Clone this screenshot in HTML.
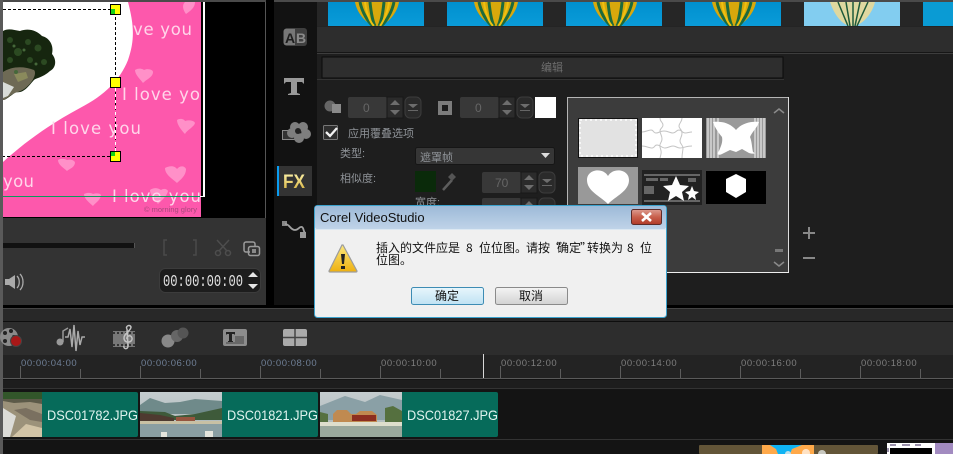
<!DOCTYPE html>
<html><head><meta charset="utf-8"><style>
html,body{margin:0;padding:0;background:#1e1e1e;width:953px;height:454px;overflow:hidden}
svg{display:block}
text{font-family:"Liberation Sans","WenQuanYi Zen Hei","Noto Sans CJK SC",sans-serif}
.love{font-family:"DejaVu Sans",sans-serif;font-size:16.5px;fill:#ffd6ea;font-weight:400}
.cn{fill:#8f9398;font-size:11px}
.rl{font-family:"Liberation Sans",sans-serif;font-size:9.5px;letter-spacing:.55px}
.clip{font-family:"Liberation Sans",sans-serif;font-size:14px;fill:#dff3ee}
.dl{font-family:"WenQuanYi Zen Hei","Noto Sans CJK SC",sans-serif;font-size:12px;fill:#111}
</style></head><body>
<svg width="953" height="454" viewBox="0 0 953 454" xmlns="http://www.w3.org/2000/svg">
<defs>
<linearGradient id="sky" x1="0" y1="0" x2="0" y2="1"><stop offset="0" stop-color="#0090cf"/><stop offset="1" stop-color="#0a9bd8"/></linearGradient>
<linearGradient id="title" x1="0" y1="0" x2="0" y2="1"><stop offset="0" stop-color="#9dbad8"/><stop offset="1" stop-color="#bfd3e8"/></linearGradient>
<linearGradient id="red" x1="0" y1="0" x2="0" y2="1"><stop offset="0" stop-color="#dc9c90"/><stop offset=".5" stop-color="#c8604c"/><stop offset="1" stop-color="#b03a28"/></linearGradient>
<linearGradient id="ok" x1="0" y1="0" x2="0" y2="1"><stop offset="0" stop-color="#e8f6fc"/><stop offset="1" stop-color="#bfe2f3"/></linearGradient>
<linearGradient id="cancel" x1="0" y1="0" x2="0" y2="1"><stop offset="0" stop-color="#f4f4f4"/><stop offset="1" stop-color="#d2d2d2"/></linearGradient>
<linearGradient id="warn" x1="0" y1="0" x2="0" y2="1"><stop offset="0" stop-color="#fbe67a"/><stop offset="1" stop-color="#eeb010"/></linearGradient>
<linearGradient id="fx" x1="0" y1="0" x2="0" y2="1"><stop offset="0" stop-color="#fff6b0"/><stop offset="1" stop-color="#d0a830"/></linearGradient>
<linearGradient id="mt" x1="0" y1="0" x2="0" y2="1"><stop offset="0" stop-color="#c4ccce"/><stop offset=".5" stop-color="#b8c2c4"/><stop offset="1" stop-color="#a8b4b4"/></linearGradient>
<g id="bl"><rect width="96" height="24" fill="url(#sky)"/>
<path d="M27 0H71C69 12 58 24 49 24S29 12 27 0Z" fill="#d8a80c"/>
<path d="M32 0C34 10 40 20 45 24M42 0C43 10 45 20 47 24M56 0C55 10 53 20 51 24M66 0C64 10 58 20 53 24" fill="none" stroke="#1d6a3c" stroke-width="3"/>
<path d="M37 0C38 10 42 20 46 24M61 0C60 10 55 20 52 24" fill="none" stroke="#f0c010" stroke-width="2"/></g>
<g id="spin"><rect x="0" y="0" width="39" height="21" rx="2" fill="#383838"/><rect x="39" y="0" width="16" height="21" fill="#2b2b2b" stroke="#181818"/><path d="M47 3l5 5h-10zM47 18l5-5h-10z" fill="#6d6d6d"/><rect x="57" y="0" width="16" height="21" rx="5" fill="#2a2a2a" stroke="#3c3c3c"/><path d="M60 7h10l-5 4z" fill="#6d6d6d"/><rect x="60" y="13" width="10" height="1" fill="#666"/></g>
</defs>

<rect width="953" height="454" fill="#1e1e1e"/>

<!-- preview panel -->
<rect x="0" y="0" width="953" height="2" fill="#4a4a4a"/>
<rect x="3" y="2" width="262" height="216" fill="#000"/>
<rect x="3" y="2" width="198" height="215" fill="#fd58ac"/>
<path d="M3 2H128C134 25 135 40 128 60C120 80 105 95 80 108C50 124 25 142 3 162Z" fill="#fff"/>
<g fill="#ff90c8">
<path d="M185 2h10c0 6-5 9-9 12-2-3-5-8-1-12ZM135 70c5-3 9 0 9 0 4-2 9 0 9 2 0 5-6 7-10 11-2-3-8-8-8-13ZM177 120c3-2 7-1 8 1 3-1 9-1 10 2-1 4-8 7-10 11-3-3-8-9-8-14ZM58 160c3-2 8-1 9 0 3-1 8 0 8 3-1 5-6 6-8 8-3-3-9-6-9-11ZM165 168c4-2 9-3 12 1 3-4 8-3 9 0 0 7-6 11-9 14-4-4-12-8-12-15ZM84 194c4-2 8-1 9 0 3-1 7-1 8 1-1 6-6 8-8 11-3-3-9-7-9-12ZM150 190c4-3 8-2 11 0 3-2 6-1 7 1-1 5-6 9-10 13-3-4-8-9-8-14Z"/>
</g>
<text x="133" y="35" class="love" textLength="59">ve you</text>
<text x="122" y="100" class="love" textLength="78">I love yo</text>
<text x="51" y="134" class="love" textLength="90">I love you</text>
<text x="3" y="187" class="love" textLength="31">you</text>
<text x="112" y="202" class="love" textLength="89">I love you</text>
<text x="144" y="212" font-size="7.5" fill="#a8487c">© morning glory</text>
<!-- tree blob -->
<path d="M3 31C8 28 14 30 20 31C28 28 36 30 42 36C50 38 54 46 52 54C57 60 56 68 50 71C42 78 36 78 34 80C30 84 24 94 16 92C10 96 6 100 3 100Z" fill="#16260f"/>
<path d="M3 72C12 66 24 66 34 70C38 74 30 88 18 92C10 94 6 100 3 100Z" fill="#6e6a55"/>
<path d="M3 82L14 87L8 96L3 98Z" fill="#d8dcd8"/>
<path d="M14 74L26 72L28 78L18 82Z" fill="#8a8a5c"/>
<g fill="#2c4a22"><circle cx="10" cy="40" r="3"/><circle cx="18" cy="52" r="4"/><circle cx="28" cy="42" r="3"/><circle cx="38" cy="48" r="3.500"/><circle cx="44" cy="62" r="3"/><circle cx="30" cy="60" r="3"/><circle cx="10" cy="60" r="3"/></g>
<g fill="#46683a"><circle cx="16" cy="72" r="2"/><circle cx="24" cy="50" r="1.500"/><circle cx="14" cy="46" r="1.500"/><circle cx="36" cy="64" r="1.500"/></g>
<!-- selection -->
<rect x="203" y="2" width="2" height="195" fill="#fff"/>
<rect x="3" y="196" width="202" height="1" fill="#fff"/>
<rect x="3" y="196" width="197" height="1" fill="#0a9a5c"/>
<path d="M3 9.500H115.500V156.500H3" fill="none" stroke="#000" stroke-dasharray="3 2" stroke-width="1"/>
<path d="M115.500 88V156" fill="none" stroke="#fff" stroke-dasharray="3 3" stroke-width="1"/>
<rect x="110.500" y="4.500" width="10" height="10" fill="#ffff00" stroke="#000"/><rect x="111" y="9" width="4" height="5" fill="#13d313"/>
<rect x="110.500" y="77.500" width="10" height="10" fill="#ffff00" stroke="#000"/>
<rect x="110.500" y="151.500" width="10" height="10" fill="#ffff00" stroke="#000"/><rect x="111" y="152" width="4" height="4" fill="#13d313"/>

<rect x="0" y="0" width="3" height="454" fill="#5a5a5a"/>
<rect x="265" y="2" width="1" height="216" fill="#555"/>
<!-- player controls -->
<rect x="3" y="218" width="267" height="87" fill="#333"/>
<rect x="3" y="243" width="132" height="5" fill="#111"/>
<rect x="134" y="243" width="1" height="5" fill="#555"/>
<path d="M167 240h-3v15h3M193 240h3v15h-3" fill="none" stroke="#4a4a4a" stroke-width="1.500"/>
<g stroke="#4d4d4d" stroke-width="1.500" fill="none"><path d="M217 240L227 251M229 240L219 251"/><circle cx="218" cy="253" r="2.500"/><circle cx="228" cy="253" r="2.500"/></g>
<g fill="none" stroke="#9b9b9b" stroke-width="1.500"><path d="M250 252h-4a2 2 0 0 1-2-2v-6a2 2 0 0 1 2-2h7a2 2 0 0 1 2 2v2"/><rect x="248.500" y="246.500" width="11" height="9" rx="2"/></g>
<rect x="252" y="249" width="4" height="4" fill="#8a8a8a"/>
<path d="M5 279h4l6-4v14l-6-4H5Z" fill="#aaa"/>
<path d="M17 276c3 3 3 9 0 12M20 274c4 4 4 12 0 16" fill="none" stroke="#aaa" stroke-width="1.300"/>
<rect x="159.500" y="268.500" width="101" height="24" rx="6" fill="#1d1d1d" stroke="#3c3c3c"/>
<text x="163" y="286" font-size="17" fill="#e4e4e4" textLength="80" lengthAdjust="spacingAndGlyphs" style="font-family:'Liberation Mono',monospace">00:00:00:00</text>
<path d="M253 272l5 5h-10zM253 289l5-5h-10z" fill="#e6e6e6"/>

<!-- sidebar -->
<rect x="266" y="0" width="8" height="306" fill="#000"/>
<rect x="274" y="2" width="43" height="304" fill="#121212"/>
<rect x="317" y="2" width="636" height="50" fill="#2d2d2d"/>
<rect x="283.500" y="28.500" width="23" height="17" rx="3" fill="#777"/>
<path d="M295 28h9a3 3 0 0 1 3 3v12a3 3 0 0 1-3 3h-9z" fill="#3f3f3f"/>
<text x="285" y="43" font-size="14" font-weight="700" fill="#1e1e1e">A</text>
<text x="296" y="43" font-size="14" font-weight="700" fill="#8a8a8a">B</text>
<path d="M284 78h20v6l-2-2h-5v11l3 1v1h-12v-1l3-1V82h-5l-2 2z" fill="#999"/>
<rect x="282.500" y="130.500" width="15" height="9" fill="#333" stroke="#8a8a8a"/>
<g fill="#7e7e7e"><circle cx="295" cy="127" r="5"/><circle cx="303" cy="127" r="5"/><circle cx="306" cy="134" r="5"/><circle cx="299" cy="138" r="5"/><circle cx="292" cy="133" r="5"/></g>
<circle cx="298" cy="131" r="3" fill="#222"/>
<rect x="277" y="166" width="35" height="30" fill="#333"/>
<rect x="277" y="166" width="2" height="30" fill="#0a9cf0"/>
<text x="283" y="188" font-size="19" font-weight="700" fill="url(#fx)" textLength="22" lengthAdjust="spacingAndGlyphs">FX</text>
<rect x="282" y="221" width="5" height="5" fill="#888"/>
<path d="M285 224c5 0 5 6 10 6 4 0 4-4 7-3 2 1 1 4 3 6" fill="none" stroke="#a0a0a0" stroke-width="1.800"/>
<rect x="300" y="232" width="6" height="6" fill="#9a9a9a"/>

<!-- balloons -->
<rect x="317" y="2" width="636" height="24" fill="#262626"/>
<use href="#bl" x="328" y="2"/><use href="#bl" x="447" y="2"/><use href="#bl" x="566" y="2"/><use href="#bl" x="685" y="2"/>
<rect x="804" y="2" width="96" height="24" fill="#82cdf0"/>
<path d="M830 2H875C872 14 862 26 852 26S834 14 830 2Z" fill="#dfd8a0"/>
<path d="M838 2L848 26M846 2L850 26M853 2V26M860 2L855 26M868 2L857 26" stroke="#1e5a3a" stroke-width="1.500"/>
<rect x="923" y="2" width="30" height="24" fill="#0a9bd4"/>
<rect x="317" y="26" width="636" height="1" fill="#242424"/>
<rect x="317" y="52" width="636" height="1" fill="#161616"/>
<rect x="317" y="53" width="636" height="1" fill="#3d3d3d"/>
<rect x="317" y="54" width="636" height="252" fill="#1e1e1e"/>
<rect x="322" y="57" width="461" height="21" fill="#2e2e2e" stroke="#0b0b0b"/>
<rect x="317" y="79" width="467" height="1" fill="#333"/>
<text x="541" y="71" class="cn" style="fill:#6f6f6f">编辑</text>

<!-- attribute controls -->
<circle cx="330" cy="106" r="5.500" fill="#666"/><rect x="332" y="104" width="9" height="9" fill="#8a8a8a"/>
<g transform="translate(348,97)"><use href="#spin"/><text x="15" y="15" font-size="12" fill="#666">0</text></g>
<rect x="438" y="101" width="14" height="14" fill="#7c7c7c"/><rect x="442" y="105" width="6" height="6" fill="#1c1c1c"/>
<g transform="translate(460,97)"><use href="#spin"/><text x="15" y="15" font-size="12" fill="#666">0</text></g>
<rect x="535" y="97" width="21" height="21" fill="#fff"/>
<rect x="323.500" y="125.500" width="14" height="14" rx="1" fill="#2e2e2e" stroke="#777"/>
<path d="M326 132l4 4 7-8" fill="none" stroke="#f2f2f2" stroke-width="2.300"/>
<text x="348" y="137" class="cn">应用覆叠选项</text>
<text x="340" y="157" class="cn">类型:</text>
<rect x="415.500" y="147.500" width="139" height="17" rx="2" fill="#363636" stroke="#161616"/>
<text x="420" y="161" class="cn">遮罩帧</text>
<path d="M541 153h9l-4.500 5z" fill="#ddd"/>
<text x="340" y="182" class="cn">相似度:</text>
<rect x="415" y="171" width="21" height="21" fill="#0a2a0a"/>
<path d="M443 190l9-10" stroke="#5d5d5d" stroke-width="2.500"/><path d="M452 173l4 4-4 4-4-4z" fill="#555"/>
<g transform="translate(482,172)"><use href="#spin"/><text x="13" y="15" font-size="12" fill="#666">70</text></g>
<g transform="translate(482,198)"><use href="#spin"/></g>
<text x="415" y="206" class="cn">宽度:</text>

<!-- mask panel -->
<rect x="567.500" y="97.500" width="221" height="175" fill="#3c3c3c" stroke="#b5b5b5"/>
<rect x="788" y="97" width="1" height="176" fill="#ddd"/>
<rect x="567" y="272" width="222" height="1" fill="#eee"/>
<path d="M774 113l5-4 5 4M774 262l5 4 5-4" fill="none" stroke="#8a8a8a" stroke-width="1.500"/>
<rect x="775" y="249" width="8" height="3" fill="#777"/>
<rect x="578.500" y="118.500" width="59" height="39" fill="#e2e2e2" stroke="#111"/>
<rect x="580" y="120" width="56" height="36" fill="none" stroke="#f6f6f6" stroke-width="2" stroke-dasharray="2 3"/>
<rect x="642" y="118" width="60" height="40" fill="#fff"/>
<g stroke="#c4c4c4" fill="none"><path d="M642 132c4 0 6-2 9-2s2 3 5 3 4-2 8-2 6 2 9 2 3-3 6-3 3 3 6 3 4-1 7-1M642 146c4 0 7 2 10 2s2-3 5-3 5 3 8 3 5-2 8-2 4 2 7 2 7-2 12-2M660 118c0 4 3 4 3 7s-3 3-3 6 2 4 2 8-3 4-2 8 2 4 0 11M682 118c0 4-3 5-3 8s3 3 3 7-2 5-2 8 3 4 3 7-1 5-1 10"/></g>
<rect x="706" y="118" width="60" height="40" fill="#9a9a9a"/>
<path d="M708 118v40M711 118v40M714 118v40M718 118v40M755 118v40M758 118v40M761 118v40M764 118v40" stroke="#e0e0e0" stroke-width="1.300"/>
<path d="M713 122C722 121 730 123 736 130C741 124 750 121 759 122C757 128 752 132 750 137C752 142 752 148 753 152C757 154 752 154 749 153L742 149L736 152L730 150L722 154C718 156 716 154 719 151C721 146 723 142 722 137C718 132 715 128 713 122Z" fill="#fff"/>
<rect x="578" y="167" width="60" height="37" fill="#999"/>
<path d="M608 204c-8-8-21-13-21-24 0-11 16-13 21-4 5-9 21-7 21 4 0 11-13 16-21 24Z" fill="#fff"/>
<rect x="642" y="170" width="60" height="35" fill="#222"/>
<path d="M644 174h56v2h-56zM646 178h12v3h-12zM660 178h8v3h-8zM688 178h8v4h-8zM644 186h10v8h-10zM644 200h56v2h-56z" fill="#666"/>
<path d="M676 176l4 9 9 1-7 6 2 9-8-5-8 5 2-9-7-6 9-1zM692 186l2 5 5 1-4 3 1 5-4-3-4 3 1-5-4-3 5-1z" fill="#fff"/>
<rect x="706" y="171" width="60" height="33" fill="#000"/>
<path d="M736 174l10 5v13l-10 6-10-6v-13z" fill="#fff"/>
<path d="M809 227v12M803 233h12" stroke="#888" stroke-width="2"/>
<path d="M803 258h12" stroke="#888" stroke-width="2"/>

<!-- timeline -->
<rect x="3" y="305" width="950" height="3" fill="#000"/>
<rect x="3" y="308" width="950" height="1" fill="#444"/>
<rect x="3" y="309" width="950" height="12" fill="#282828"/>
<rect x="3" y="321" width="950" height="1" fill="#0e0e0e"/>
<rect x="3" y="322" width="950" height="33" fill="#2d2d2d"/>
<rect x="3" y="355" width="950" height="23" fill="#232323"/>
<rect x="3" y="378" width="950" height="1" fill="#5a5a5a"/>
<rect x="3" y="379" width="950" height="9" fill="#1d1d1d"/>
<rect x="3" y="379" width="950" height="1" fill="#141414"/>
<rect x="3" y="388" width="950" height="1" fill="#333"/>
<rect x="3" y="389" width="950" height="65" fill="#141414"/>
<rect x="3" y="439" width="950" height="1" fill="#333"/>

<!-- toolbar icons -->
<circle cx="9" cy="337" r="9" fill="#8a8a8a"/><circle cx="5" cy="333" r="2" fill="#222"/><circle cx="11" cy="331" r="2" fill="#222"/><circle cx="14" cy="337" r="2" fill="#222"/><circle cx="5" cy="341" r="2" fill="#222"/>
<circle cx="16" cy="341" r="5.500" fill="#a81818" stroke="#444"/>
<circle cx="60" cy="342" r="3.500" fill="#999"/><path d="M63 342V331l5-3" fill="none" stroke="#9a9a9a" stroke-width="1.500"/>
<path d="M65 337h3l2-8 2 18 2-22 2 26 2-20 2 14 2-8h3" fill="none" stroke="#aaa" stroke-width="1.500"/>
<rect x="113" y="331" width="22" height="16" fill="#777"/>
<path d="M113 333h22M113 345h22" stroke="#333" stroke-dasharray="2 2" stroke-width="2"/>
<path d="M127 329c-2-3 3-5 4-2 0 4-7 6-7 11 0 6 9 5 8 0-1-4-6-2-5 1M127 329l1 17c0 4-5 3-4 0" fill="none" stroke="#c2c2c2" stroke-width="1.500"/>
<circle cx="168" cy="341" r="6.500" fill="#888"/><circle cx="177" cy="336" r="6" fill="#666"/><circle cx="183" cy="333" r="5.500" fill="#555"/>
<rect x="223" y="329" width="24" height="17" rx="2" fill="#8c8c8c"/>
<path d="M226 332h9v3l-1-1h-2v7h1v1h-5v-1h1v-7h-2l-1 1z" fill="#222"/>
<path d="M235 337h9M235 339h9M235 341h9M226 343h18" stroke="#444"/>
<rect x="283" y="329" width="24" height="17" rx="2" fill="#aaa"/>
<path d="M283 337.500h24M295 329v17" stroke="#444" stroke-width="1.500"/>

<!-- ruler -->
<g fill="#5c5c5c">
<rect x="20" y="366" width="1" height="12"/><rect x="80" y="369" width="1" height="9"/>
<rect x="140" y="366" width="1" height="12"/><rect x="200" y="369" width="1" height="9"/>
<rect x="260" y="366" width="1" height="12"/><rect x="320" y="369" width="1" height="9"/>
<rect x="380" y="366" width="1" height="12"/><rect x="440" y="369" width="1" height="9"/>
<rect x="500" y="366" width="1" height="12"/><rect x="560" y="369" width="1" height="9"/>
<rect x="620" y="366" width="1" height="12"/><rect x="680" y="369" width="1" height="9"/>
<rect x="740" y="366" width="1" height="12"/><rect x="800" y="369" width="1" height="9"/>
<rect x="860" y="366" width="1" height="12"/><rect x="920" y="369" width="1" height="9"/>
</g>
<rect x="483" y="354" width="1" height="24" fill="#d8d8d8"/>
<text x="21" y="366" class="rl" fill="#6f7f96">00:00:04:00</text>
<text x="141" y="366" class="rl" fill="#6f7f96">00:00:06:00</text>
<text x="261" y="366" class="rl" fill="#6f7f96">00:00:08:00</text>
<text x="381" y="366" class="rl" fill="#7d7d7d">00:00:10:00</text>
<text x="501" y="366" class="rl" fill="#7d7d7d">00:00:12:00</text>
<text x="621" y="366" class="rl" fill="#7d7d7d">00:00:14:00</text>
<text x="741" y="366" class="rl" fill="#7d7d7d">00:00:16:00</text>
<text x="861" y="366" class="rl" fill="#7d7d7d">00:00:18:00</text>

<!-- clips -->
<rect x="3" y="392" width="135" height="45" rx="2" fill="#066b5a"/>
<rect x="3" y="392" width="39" height="45" fill="#9c927a"/>
<rect x="3" y="392" width="39" height="7" fill="#32562a"/>
<path d="M3 399H42V404L30 402L14 403L3 401Z" fill="#5c5a48"/>
<path d="M14 410L26 408L42 414V422L30 420Z" fill="#7a7060"/>
<path d="M3 408L16 416L10 437H3Z" fill="#dcdcd8"/><path d="M12 437L26 424L42 428V437Z" fill="#d2c4a6"/>
<text x="47" y="420" class="clip" textLength="91" lengthAdjust="spacingAndGlyphs">DSC01782.JPG</text>
<rect x="140" y="392" width="178" height="45" rx="2" fill="#066b5a"/>
<rect x="140" y="392" width="82" height="45" fill="url(#mt)"/>
<path d="M140 405L150 398L165 403L180 402L195 399L222 401V414H140Z" fill="#6f8a8a"/>
<path d="M140 411L165 412L175 416L195 414L222 408V420H140Z" fill="#3e5a3a"/>
<path d="M140 413l20 2 14 3v3h-34z" fill="#4e3a30"/><path d="M176 417h19v4h-19z" fill="#96543e"/>
<rect x="140" y="421" width="82" height="3" fill="#c8c0a4"/>
<rect x="140" y="424" width="82" height="13" fill="#8a9ea2"/>
<path d="M161 432h6v5h-6zM205 431h8v6h-8z" fill="#e4e4dc"/>
<text x="227" y="420" class="clip" textLength="91" lengthAdjust="spacingAndGlyphs">DSC01821.JPG</text>
<rect x="320" y="392" width="178" height="45" rx="2" fill="#066b5a"/>
<rect x="320" y="392" width="82" height="45" fill="url(#mt)"/>
<path d="M320 406L345 396L365 402L380 395L402 400V420H320Z" fill="#8aa0a6"/>
<path d="M320 412l8 2v8h-8zM385 408l8-2 9 5v11h-17z" fill="#55703f"/>
<path d="M333 414l4-4h10l4 4h5l4-3h12l5 4v7h-44z" fill="#c08a50"/><rect x="352" y="415" width="24" height="6" fill="#8c2e20"/>
<rect x="320" y="422" width="82" height="4" fill="#dedecc"/><rect x="320" y="426" width="82" height="11" fill="#9aa89c"/>
<text x="407" y="420" class="clip" textLength="91" lengthAdjust="spacingAndGlyphs">DSC01827.JPG</text>

<!-- bottom library fragments -->
<rect x="699" y="445" width="179" height="9" rx="1" fill="#635538"/>
<rect x="762" y="445" width="52" height="9" fill="#ffa94a"/>
<path d="M770 445h32l-10 4-2 5h-12l-2-5z" fill="#10b4f4"/>
<circle cx="788" cy="454" r="3" fill="#bfe0ea"/><circle cx="806" cy="453" r="4" fill="#ffe2c4"/><circle cx="822" cy="454" r="4" fill="#c8c8c0"/>
<rect x="887" y="443" width="66" height="11" fill="#a28bc0"/>
<rect x="887" y="443" width="48" height="11" fill="#fff"/>
<path d="M890 445h6M902 445h8M915 445h6M888 448v4" stroke="#7c6f90" stroke-width="1.500"/>
<rect x="890" y="448" width="42" height="6" fill="#000"/>

<!-- dialog -->
<rect x="314.500" y="205.500" width="352" height="112" rx="3" fill="#f0f0f0" stroke="#3ba2cd"/>
<rect x="315" y="206" width="351" height="23" rx="2" fill="url(#title)"/>
<rect x="315" y="229" width="351" height="1" fill="#dce8f2"/>
<text x="320" y="222" font-size="13" fill="#111">Corel VideoStudio</text>
<rect x="631.500" y="209.500" width="30" height="15" rx="2" fill="url(#red)" stroke="#5d2b28"/>
<path d="M642 213l9 8M651 213l-9 8" stroke="#fff" stroke-width="2.600"/>
<path d="M343 245l14 26a1 1 0 0 1-1 1h-26a1 1 0 0 1-1-1l13-26Z" fill="url(#warn)" stroke="#9c9c9c" stroke-width="1.200"/>
<path d="M341 254h4l-1 10h-2zM341 266h4v3h-4z" fill="#222"/>
<text x="376" y="252" class="dl">插入的文件应是</text>
<text x="466" y="252" class="dl">8</text>
<text x="479" y="252" class="dl">位位图。</text>
<text x="526" y="252" class="dl">请按</text>
<text x="549" y="252" class="dl">“</text>
<text x="557" y="252" class="dl">确定</text>
<text x="580" y="252" class="dl">”</text>
<text x="587" y="252" class="dl">转换为</text>
<text x="627" y="252" class="dl">8</text>
<text x="640" y="252" class="dl">位</text>
<text x="376" y="264" class="dl">位图。</text>
<rect x="411.500" y="287.500" width="72" height="17" rx="2" fill="url(#ok)" stroke="#3d8cb4"/>
<text x="435" y="300" class="dl">确定</text>
<rect x="495.500" y="287.500" width="72" height="17" rx="2" fill="url(#cancel)" stroke="#8a8a8a"/>
<text x="519" y="300" class="dl">取消</text>
</svg>
</body></html>
